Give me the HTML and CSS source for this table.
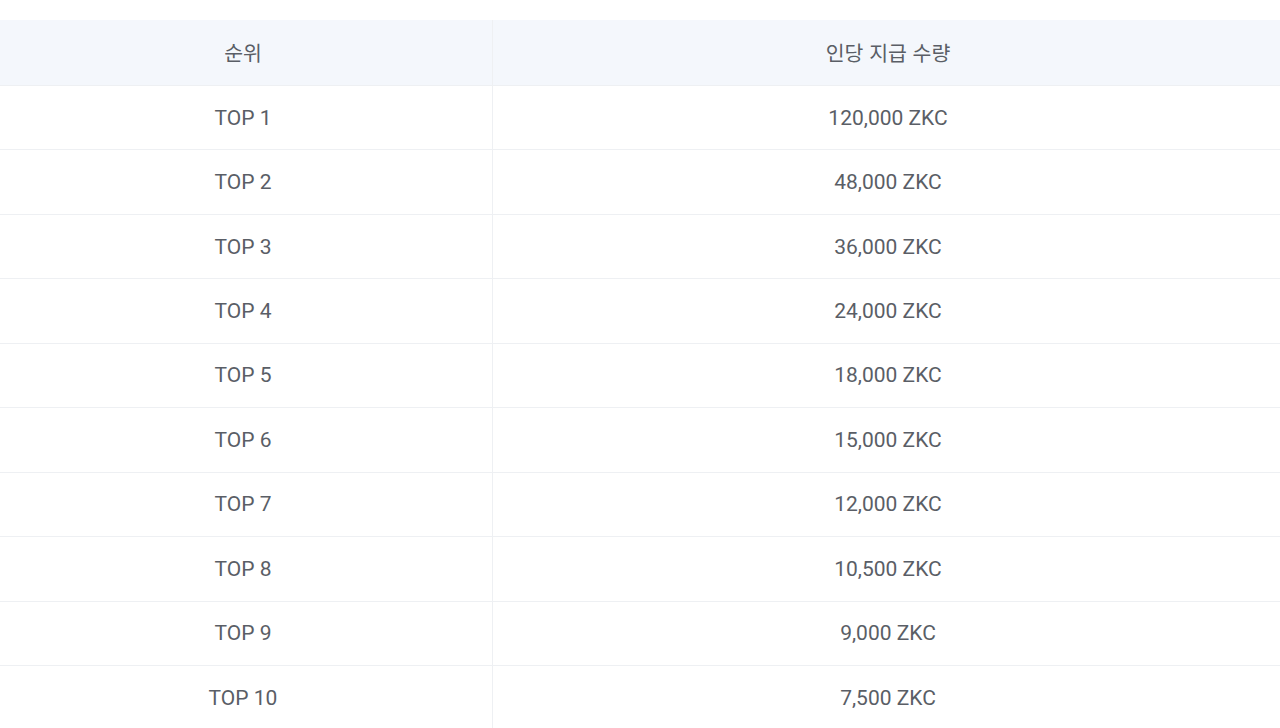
FILE: index.html
```html
<!DOCTYPE html>
<html lang="ko">
<head>
<meta charset="utf-8">
<link rel="stylesheet" href="styles.css">
</head>
<body>
<div class="page">
  <table class="rank-table">
    <thead>
      <tr><th class="col-rank">순위</th><th>인당 지급 수량</th></tr>
    </thead>
    <tbody>
      <tr><td>TOP 1</td><td>120,000 ZKC</td></tr>
      <tr><td>TOP 2</td><td>48,000 ZKC</td></tr>
      <tr><td>TOP 3</td><td>36,000 ZKC</td></tr>
      <tr><td>TOP 4</td><td>24,000 ZKC</td></tr>
      <tr><td>TOP 5</td><td>18,000 ZKC</td></tr>
      <tr><td>TOP 6</td><td>15,000 ZKC</td></tr>
      <tr><td>TOP 7</td><td>12,000 ZKC</td></tr>
      <tr><td>TOP 8</td><td>10,500 ZKC</td></tr>
      <tr><td>TOP 9</td><td>9,000 ZKC</td></tr>
      <tr><td>TOP 10</td><td>7,500 ZKC</td></tr>
    </tbody>
  </table>
</div>
</body>
</html>
```

FILE: styles.css
```css
html, body {
  margin: 0;
  padding: 0;
  background: #ffffff;
  overflow: hidden;
  height: 728px;
}
.page {
  padding-top: 19.5px;
  margin-left: -6px;
  width: 1289px;
}
.rank-table {
  width: 100%;
  border-collapse: collapse;
  table-layout: fixed;
  font-family: Roboto, "Noto Sans CJK KR", sans-serif;
  font-size: 21px;
  color: #5a5e66;
}
.rank-table th,
.rank-table td {
  text-align: center;
  vertical-align: middle;
  padding: 0;
  border-bottom: 1px solid #eef0f3;
}
.rank-table th {
  background: #f4f7fc;
  font-weight: 400;
  height: 65.5px;
  font-family: "Noto Sans CJK KR", Roboto, sans-serif;
  font-size: 20.5px;
}
.rank-table td {
  height: 63.44px;
}
.rank-table .col-rank {
  width: 498px;
}
.rank-table th:first-child,
.rank-table td:first-child {
  border-right: 1px solid #eef0f3;
}
```
